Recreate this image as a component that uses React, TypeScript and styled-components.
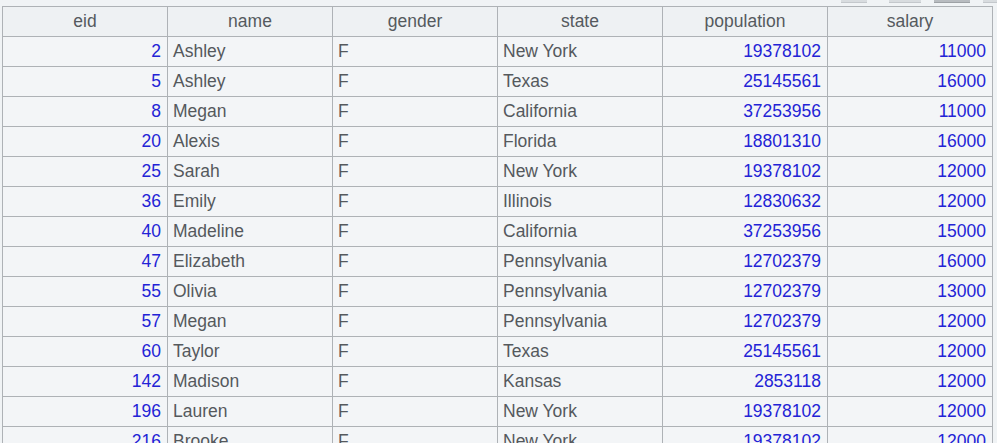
import React from "react";
import styled, { createGlobalStyle } from "styled-components";

const Global = createGlobalStyle`
  html, body {
    margin: 0;
    padding: 0;
    background: #f0f3f5;
    overflow: hidden;
  }
  body {
    font-family: "Liberation Sans", Arial, sans-serif;
  }
`;

const Page = styled.div`
  display: flex;
  flex-direction: column;
  width: 997px;
  height: 443px;
  overflow: hidden;
  background: #f0f3f5;
`;

const Toolbar = styled.div`
  display: flex;
  flex-shrink: 0;
  justify-content: flex-end;
  align-items: flex-start;
  height: 6px;
  gap: 13px;
`;

const ToolButton = styled.div<{ $w: number; $dark?: boolean }>`
  width: ${(p) => p.$w}px;
  height: 2px;
  background: ${(p) => (p.$dark ? "#b8bcc0" : "#d8dcdf")};
  border-bottom: 1px solid ${(p) => (p.$dark ? "#9ea2a6" : "#c4c8cc")};
`;

const Grid = styled.div`
  flex-shrink: 0;
  margin-left: 2px;
  display: grid;
  grid-template-columns: repeat(6, 165px);
  grid-auto-rows: 30px;
  border-left: 1px solid #aeb2b6;
  border-top: 1px solid #aeb2b6;
  width: max-content;
`;

const HeaderCell = styled.div`
  box-sizing: border-box;
  border-right: 1px solid #aeb2b6;
  border-bottom: 1px solid #aeb2b6;
  background: #eef1f3;
  color: #555a5e;
  font-size: 17.5px;
  display: flex;
  align-items: center;
  justify-content: center;
  white-space: nowrap;
`;

const Cell = styled.div<{ $num?: boolean }>`
  box-sizing: border-box;
  border-right: 1px solid #aeb2b6;
  border-bottom: 1px solid #aeb2b6;
  background: #f3f5f7;
  color: ${(p) => (p.$num ? "#2323d6" : "#55595d")};
  font-size: 17.5px;
  display: flex;
  align-items: center;
  justify-content: ${(p) => (p.$num ? "flex-end" : "flex-start")};
  padding: ${(p) => (p.$num ? "0 6px 0 0" : "0 0 0 5px")};
  white-space: nowrap;
  overflow: hidden;
`;

const columns = ["eid", "name", "gender", "state", "population", "salary"];
const numeric = [true, false, false, false, true, true];

const rows: (string | number)[][] = [
  [2, "Ashley", "F", "New York", 19378102, 11000],
  [5, "Ashley", "F", "Texas", 25145561, 16000],
  [8, "Megan", "F", "California", 37253956, 11000],
  [20, "Alexis", "F", "Florida", 18801310, 16000],
  [25, "Sarah", "F", "New York", 19378102, 12000],
  [36, "Emily", "F", "Illinois", 12830632, 12000],
  [40, "Madeline", "F", "California", 37253956, 15000],
  [47, "Elizabeth", "F", "Pennsylvania", 12702379, 16000],
  [55, "Olivia", "F", "Pennsylvania", 12702379, 13000],
  [57, "Megan", "F", "Pennsylvania", 12702379, 12000],
  [60, "Taylor", "F", "Texas", 25145561, 12000],
  [142, "Madison", "F", "Kansas", 2853118, 12000],
  [196, "Lauren", "F", "New York", 19378102, 12000],
  [216, "Brooke", "F", "New York", 19378102, 12000],
];

export default function App() {
  return (
    <Page>
      <Global />
      <Toolbar>
        <ToolButton $w={26} />
        <ToolButton $w={32} style={{ marginLeft: 9 }} />
        <ToolButton $w={36} $dark />
        <ToolButton $w={14} />
      </Toolbar>
      <Grid>
        {columns.map((c) => (
          <HeaderCell key={c}>{c}</HeaderCell>
        ))}
        {rows.map((r, i) =>
          r.map((v, j) => (
            <Cell key={`${i}-${j}`} $num={numeric[j]}>
              {v}
            </Cell>
          ))
        )}
      </Grid>
    </Page>
  );
}
